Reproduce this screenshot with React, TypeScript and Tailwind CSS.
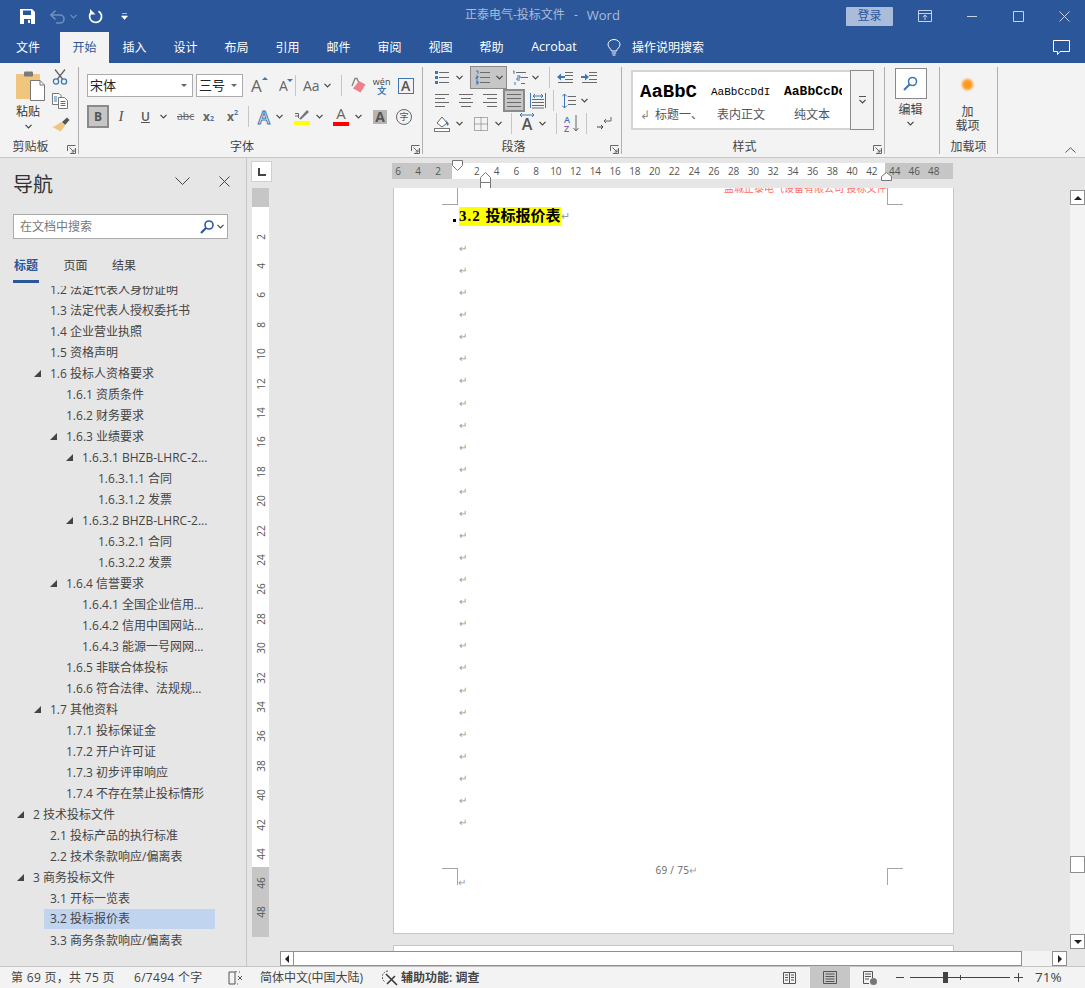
import type { ReactNode } from 'react';

const BLUE = '#3f77b5';
const GRAY = '#6a6a6a';

const Chev = ({ color = '#444', className = '' }: { color?: string; className?: string }) => (
  <svg width="7" height="5" viewBox="0 0 7 5" className={className}>
    <path d="M0.5 0.8 3.5 3.8 6.5 0.8" fill="none" stroke={color} strokeWidth="1.2" />
  </svg>
);

const Launcher = ({ className = '' }: { className?: string }) => (
  <svg width="9" height="9" viewBox="0 0 9 9" className={className}>
    <path d="M0.5 6V0.5H8.5M8.5 3V8.5H3M2.5 2.5 7 7M7 4.5V7H4.5" fill="none" stroke="#666" strokeWidth="1" />
  </svg>
);

const Lines = ({ kind }: { kind: 'left' | 'center' | 'right' | 'justify' }) => {
  const rows = {
    left: ['M0 1.5H14', 'M0 5.5H10', 'M0 9.5H14', 'M0 13.5H10'],
    center: ['M0 1.5H14', 'M2 5.5H12', 'M0 9.5H14', 'M2 13.5H12'],
    right: ['M0 1.5H14', 'M4 5.5H14', 'M0 9.5H14', 'M4 13.5H14'],
    justify: ['M0 1.5H14', 'M0 5.5H14', 'M0 9.5H14', 'M0 13.5H14'],
  }[kind];
  return (
    <svg width="14" height="15" viewBox="0 0 14 15">
      {rows.map((d) => (
        <path key={d} d={d} stroke={GRAY} strokeWidth="1" />
      ))}
    </svg>
  );
};

const Group = ({
  label,
  width,
  children,
  launcher = true,
}: {
  label: string;
  width: string;
  children: ReactNode;
  launcher?: boolean;
}) => (
  <div className={`${width} mt-[3px] flex h-[87px] shrink-0 flex-col border-r border-[#b0b0b0]`}>
    <div className="-mt-[3px] h-[73px] shrink-0">{children}</div>
    <div className="flex h-[17px] items-center pt-[2px]">
      <span className={`flex-1 text-center text-[12px] leading-none text-[#444] ${launcher ? 'pr-[6px]' : ''}`}>{label}</span>
      {launcher && <Launcher className="mr-[2px] mt-[5px]" />}
    </div>
  </div>
);

const Clipboard = () => (
  <div className="flex h-[73px]">
    <div className="ml-[16px] flex w-[28px] flex-col items-start">
      <svg width="29" height="31" viewBox="0 0 29 31" className="mt-[7px]">
        <rect x="0" y="3" width="24" height="25" rx="1" fill="#f0c67e" />
        <rect x="8" y="0.5" width="9" height="5" rx="1" fill="#7a7a7a" />
        <path d="M14.5 9.5H24L28.5 14V29.5H14.5Z" fill="#fff" stroke="#777" />
        <path d="M24 9.5V14H28.5" fill="none" stroke="#777" />
      </svg>
      <span className="mt-[3px] whitespace-nowrap text-[12px] leading-[14px] text-[#333]">粘贴</span>
      <Chev className="ml-[9px] mt-[5px]" />
    </div>
    <div className="ml-[8px] flex flex-col gap-[8px] pt-[5px]">
      <svg width="16" height="16" viewBox="0 0 16 16">
        <path d="M3 0.5 10.5 10M13 0.5 5.5 10" stroke="#666" strokeWidth="1.3" fill="none" />
        <circle cx="4" cy="12.5" r="2.6" fill="none" stroke={BLUE} strokeWidth="1.3" />
        <circle cx="12" cy="12.5" r="2.6" fill="none" stroke={BLUE} strokeWidth="1.3" />
      </svg>
      <svg width="16" height="16" viewBox="0 0 16 16">
        <path d="M0.5 0.5H7L9 2.5V11.5H0.5Z" fill="#fff" stroke="#777" />
        <path d="M6.5 4.5H12.5L15.5 7.5V15.5H6.5Z" fill="#fff" stroke="#777" />
        <path d="M8.5 8.5H13.5M8.5 10.5H13.5M8.5 12.5H13.5M2 4H5M2 6H5M2 8H5" stroke={BLUE} />
      </svg>
      <svg width="18" height="15" viewBox="0 0 18 15">
        <path d="M10 5 15 0.5 17.5 3 13 8Z" fill="#555" />
        <path d="M9 5 13 9 8.5 14.5 0.5 10 4 8.5Z" fill="#f0c67e" />
      </svg>
    </div>
  </div>
);

const FontGroup = () => (
  <div className="flex h-[73px] flex-col pl-[8px] pt-[10px] text-[#444]">
    <div className="flex h-[23px] items-center">
      <div className="flex h-[23px] w-[106px] items-center justify-between border border-[#ababab] bg-white pl-[2px] pr-[5px]">
        <span className="text-[13px] leading-none text-[#222]">宋体</span>
        <span className="h-0 w-0 border-x-[3px] border-t-[3px] border-x-transparent border-t-[#666]" />
      </div>
      <div className="ml-[3px] flex h-[23px] w-[47px] items-center justify-between border border-[#ababab] bg-white pl-[2px] pr-[5px]">
        <span className="text-[13px] leading-none text-[#222]">三号</span>
        <span className="h-0 w-0 border-x-[3px] border-t-[3px] border-x-transparent border-t-[#666]" />
      </div>
      <span className="relative ml-[8px] w-[14px] text-[17px] leading-none text-[#666]">
        A
        <span className="absolute right-[-3px] top-0 h-0 w-0 border-x-[3px] border-b-[3px] border-x-transparent border-b-[#3f77b5]" />
      </span>
      <span className="relative ml-[11px] w-[15px] text-center text-[14px] leading-none text-[#666]">
        A
        <span className="absolute right-[-2px] top-0 h-0 w-0 border-x-[3px] border-t-[3px] border-x-transparent border-t-[#3f77b5]" />
      </span>
      <div className="ml-[4px] h-[21px] w-px bg-[#c6c6c6]" />
      <span className="ml-[7px] text-[14px] leading-none text-[#666]">Aa</span>
      <Chev className="ml-[4px]" />
      <div className="ml-[10px] h-[21px] w-px bg-[#c6c6c6]" />
      <svg width="17" height="17" viewBox="0 0 17 17" className="ml-[8px]">
        <path d="M9 4 15.5 7.5 10.5 15.5 3 11.5Z" fill="#ef7f8c" />
        <path d="M2 9 5 1.5 7 1.5 8.5 5" fill="none" stroke="#888" strokeWidth="1.4" />
      </svg>
      <span className="ml-[7px] flex w-[16px] flex-col items-center text-[9px] leading-[9px] text-[#444]">
        wén
        <span className="font-bold text-[#3f77b5]">文</span>
      </span>
      <span className="ml-[8px] flex h-[16px] w-[16px] items-center justify-center border border-[#3f77b5] text-[14px] font-semibold leading-none text-[#555]">
        A
      </span>
    </div>
    <div className="mt-[8px] flex h-[23px] items-center">
      <span className="flex h-[23px] w-[22px] items-center justify-center border-2 border-[#8a8a8a] bg-[#c6c6c6] text-[12px] font-bold leading-none text-[#555]">
        B
      </span>
      <span className="ml-[6px] w-[12px] text-center font-['Liberation_Serif',serif] text-[15px] italic leading-none text-[#555]">I</span>
      <span className="ml-[14px] w-[9px] text-[12px] font-semibold leading-none text-[#555] underline">U</span>
      <Chev className="ml-[10px]" />
      <span className="ml-[10px] w-[16px] whitespace-nowrap text-[10.5px] leading-none text-[#666] line-through">abc</span>
      <span className="ml-[10px] w-[12px] whitespace-nowrap text-[12px] font-bold leading-none text-[#666]">
        x<span className="text-[7px] text-[#3f77b5]">2</span>
      </span>
      <span className="ml-[12px] flex w-[13px] text-[12px] font-bold leading-none text-[#666]">
        x<span className="-mt-[2px] text-[7px] text-[#3f77b5]">2</span>
      </span>
      <div className="ml-[8px] h-[21px] w-px bg-[#c6c6c6]" />
      <span className="ml-[8px] w-[14px] text-center text-[18px] font-semibold leading-none text-white [-webkit-text-stroke:1px_#3f77b5]">A</span>
      <Chev className="ml-[5px]" />
      <div className="ml-[11px] flex w-[16px] flex-col items-center">
        <svg width="16" height="12" viewBox="0 0 16 12">
          <path d="M5 11 13 2 15 4 7 11.5Z" fill="#777" />
          <path d="M1 5.5H4.5V10M1 8H4" fill="none" stroke="#666" />
        </svg>
        <div className="mt-px h-[4px] w-[16px] bg-[#ffff00]" />
      </div>
      <Chev className="ml-[6px]" />
      <div className="ml-[10px] flex w-[16px] flex-col items-center">
        <span className="h-[13px] text-[15px] leading-[13px] text-[#666]">A</span>
        <div className="mt-[2px] h-[4px] w-[16px] bg-[#ff0000]" />
      </div>
      <Chev className="ml-[6px]" />
      <span className="ml-[11px] flex h-[14px] w-[14px] items-center justify-center bg-[#b5b5b5] text-[14px] font-bold leading-none text-[#555]">
        A
      </span>
      <span className="ml-[9px] flex h-[16px] w-[16px] items-center justify-center rounded-full border border-[#666] text-[9px] leading-none text-[#555]">
        字
      </span>
    </div>
  </div>
);

const ParagraphGroup = () => (
  <div className="flex h-[73px] flex-col pl-[12px] pt-[2px]">
    <div className="flex h-[23px] items-center">
      <svg width="14" height="15" viewBox="0 0 14 15">
        <path d="M4 2.5H14M4 7.5H14M4 12.5H14" stroke={GRAY} />
        <path d="M0 1H3V4H0ZM0 6H3V9H0ZM0 11H3V14H0Z" fill={BLUE} />
      </svg>
      <Chev className="ml-[7px]" />
      <div className="ml-[7px] flex h-[23px] w-[37px] items-center gap-[6px] border border-[#8a8a8a] bg-[#c6c6c6] pl-[4px]">
        <svg width="15" height="15" viewBox="0 0 15 15">
          <path d="M5 2.5H15M5 7.5H15M5 12.5H15" stroke={GRAY} />
          <path d="M1 1H3V4M1 6H3V7.5H1V9H3M1 11H3V14H1M1 12.5H3" fill="none" stroke={BLUE} />
        </svg>
        <Chev />
      </div>
      <svg width="16" height="16" viewBox="0 0 16 16" className="ml-[5px]">
        <path d="M4 2.5H14M9 7.5H16M9 13.5H13" stroke={GRAY} />
        <path d="M1 1H2V4M5 6H8V8H5V10H8M3 12V15" fill="none" stroke={BLUE} />
      </svg>
      <Chev className="ml-[4px]" />
      <div className="ml-[10px] h-[21px] w-px bg-[#c6c6c6]" />
      <svg width="16" height="15" viewBox="0 0 16 15" className="ml-[7px]">
        <path d="M8 2.5H16M8 5.5H16M8 9.5H16M1 12.5H16" stroke={GRAY} />
        <path d="M0 7 4 3.5V6H8V8H4V10.5Z" fill={BLUE} />
      </svg>
      <svg width="16" height="15" viewBox="0 0 16 15" className="ml-[8px]">
        <path d="M8 2.5H16M8 5.5H16M8 9.5H16M1 12.5H16" stroke={GRAY} />
        <path d="M8 7 4 3.5V6H0V8H4V10.5Z" fill={BLUE} />
      </svg>
    </div>
    <div className="flex h-[23px] items-center">
      <Lines kind="left" />
      <span className="ml-[10px]">
        <Lines kind="center" />
      </span>
      <span className="ml-[10px]">
        <Lines kind="right" />
      </span>
      <div className="ml-[6px] flex h-[23px] w-[22px] items-center justify-center border-2 border-[#8a8a8a] bg-[#c6c6c6]">
        <Lines kind="justify" />
      </div>
      <svg width="16" height="16" viewBox="0 0 16 16" className="ml-[5px]">
        <path d="M2 6.5H14M2 9.5H14M2 12.5H14M2 15H14" stroke={GRAY} />
        <path d="M0.5 0V15M15.5 0V15M3 3H13M5 1 3 3 5 5M11 1 13 3 11 5" fill="none" stroke={BLUE} />
      </svg>
      <div className="ml-[7px] h-[21px] w-px bg-[#c6c6c6]" />
      <svg width="14" height="16" viewBox="0 0 14 16" className="ml-[8px]">
        <path d="M6 3.5H14M6 7.5H14M6 11.5H14" stroke={GRAY} />
        <path d="M2.5 1V15M0 3.5 2.5 1 5 3.5M0 12.5 2.5 15 5 12.5" fill="none" stroke={BLUE} />
      </svg>
      <Chev className="ml-[5px]" />
    </div>
    <div className="-ml-px flex h-[23px] items-center">
      <svg width="16" height="17" viewBox="0 0 16 17">
        <path d="M3 8 8 2 13 8 8 12Z" fill="#fff" stroke="#666" />
        <path d="M12 5 15 9 13 11Z" fill={BLUE} />
        <rect x="0.5" y="13.5" width="15" height="3" fill="#fff" stroke="#777" />
      </svg>
      <Chev className="ml-[6px]" />
      <svg width="14" height="14" viewBox="0 0 14 14" className="ml-[11px]">
        <path
          d="M0.5 0.5H13.5V13.5H0.5ZM7 0.5V13.5M0.5 7H13.5"
          fill="none"
          stroke="#666"
          strokeDasharray="1 1"
        />
      </svg>
      <Chev className="ml-[7px]" />
      <div className="ml-[9px] h-[21px] w-px bg-[#c6c6c6]" />
      <span className="relative ml-[7px] w-[16px] text-center text-[16px] font-semibold leading-none text-[#555]">
        A
        <svg width="16" height="6" viewBox="0 0 16 6" className="absolute -top-[4px] left-0">
          <path d="M1 3H15M3 1 1 3 3 5M13 1 15 3 13 5" fill="none" stroke={BLUE} />
        </svg>
      </span>
      <Chev className="ml-[4px]" />
      <div className="ml-[10px] h-[21px] w-px bg-[#c6c6c6]" />
      <span className="ml-[7px] flex w-[9px] flex-col text-[9px] font-semibold leading-[9px]">
        <span className="text-[#3f77b5]">A</span>
        <span className="text-[#8a5aa8]">Z</span>
      </span>
      <svg width="6" height="17" viewBox="0 0 6 17">
        <path d="M3 0V16M0.5 13 3 16 5.5 13" fill="none" stroke="#666" />
      </svg>
      <div className="ml-[7px] h-[21px] w-px bg-[#c6c6c6]" />
      <svg width="15" height="15" viewBox="0 0 15 15" className="ml-[10px]">
        <path d="M14 1V5H7M9 3 7 5 9 7" fill="none" stroke="#666" />
        <path d="M0 11H6M4 9 6 11 4 13" fill="none" stroke="#444" />
      </svg>
    </div>
  </div>
);

const StylesGroup = () => (
  <div className="flex h-[73px] pl-[9px] pt-[6px]">
    <div className="flex h-[60px] w-[219px] overflow-hidden border-y-2 border-l-2 border-[#d4d4d4] bg-white">
      <div className="flex w-[78px] shrink-0 flex-col pl-[7px]">
        <span className="mt-[8px] h-[24px] font-['Liberation_Mono',monospace] text-[19px] font-bold leading-[24px] text-black">
          AaBbC
        </span>
        <span className="mt-[3px] whitespace-nowrap text-[12px] leading-[16px] text-[#555]">
          <span className="mr-[5px] text-[#888]">↲</span>标题一、
        </span>
      </div>
      <div className="flex w-[73px] shrink-0 flex-col">
        <span className="mt-[8px] h-[24px] whitespace-nowrap font-['Liberation_Mono',monospace] text-[11px] leading-[24px] text-black">
          AaBbCcDdI
        </span>
        <span className="mt-[3px] whitespace-nowrap pl-[6px] text-[12px] leading-[16px] text-[#555]">表内正文</span>
      </div>
      <div className="flex w-[58px] shrink-0 flex-col overflow-hidden">
        <span className="mt-[8px] h-[24px] whitespace-nowrap font-['Liberation_Mono',monospace] text-[13px] font-bold leading-[24px] text-black">
          AaBbCcDd
        </span>
        <span className="mt-[3px] whitespace-nowrap pl-[10px] text-[12px] leading-[16px] text-[#555]">纯文本</span>
      </div>
    </div>
    <div className="flex h-[60px] w-[24px] flex-col items-center justify-center border border-[#8a8a8a] bg-[#f3f3f3]">
      <div className="h-px w-[7px] bg-[#555]" />
      <Chev className="mt-[2px]" />
    </div>
  </div>
);

const EditGroup = () => (
  <div className="flex h-[73px] flex-col items-center pr-[3px] pt-[4px]">
    <div className="flex h-[31px] w-[32px] items-center justify-center border border-[#8a8a8a] bg-white">
      <svg width="15" height="15" viewBox="0 0 15 15">
        <circle cx="9.5" cy="5.5" r="4" fill="none" stroke={BLUE} strokeWidth="1.6" />
        <path d="M6.5 8.5 1 14" stroke={BLUE} strokeWidth="2.2" />
      </svg>
    </div>
    <span className="mt-[3px] text-[12px] leading-[16px] text-[#444]">编辑</span>
    <Chev className="mt-[3px]" />
  </div>
);

const AddinGroup = () => (
  <div className="flex h-[73px] flex-col items-center pr-[2px] pt-[15px]">
    <div className="h-[11px] w-[11px] rounded-full bg-[#ff9a1e] blur-[1px]" />
    <span className="mt-[14px] text-[12px] leading-[15px] text-[#444]">加</span>
    <span className="text-[12px] leading-[14px] text-[#444]">载项</span>
  </div>
);

const TitleBar = () => (
  <div className="flex h-[32px] items-center">
    <svg width="15" height="15" viewBox="0 0 15 15" className="ml-[20px]">
      <path d="M0 0H12L15 3V15H0Z" fill="#fff" />
      <path d="M3 1.5H11V6H3Z" fill="#2b579a" />
      <path d="M4 10H11V15H4Z" fill="#2b579a" />
      <path d="M8 11H10V14H8Z" fill="#fff" />
    </svg>
    <svg width="15" height="15" viewBox="0 0 15 15" className="ml-[15px]">
      <path d="M1.5 6H10A4 4 0 0 1 10 14H6M5.5 1.5 1 6 5.5 10.5" fill="none" stroke="#6f8fbe" strokeWidth="1.6" />
    </svg>
    <Chev color="#6f8fbe" className="ml-[5px]" />
    <svg width="15" height="15" viewBox="0 0 15 15" className="ml-[11px]">
      <path d="M10.5 2.2A6 6 0 1 1 3.6 3" fill="none" stroke="#fff" strokeWidth="1.7" />
      <path d="M2 0V5.5H7.5Z" fill="#fff" />
    </svg>
    <svg width="7" height="7" viewBox="0 0 7 7" className="ml-[18px]">
      <path d="M1 0.5H6M0.5 3H6.5L3.5 6.5Z" fill="#fff" stroke="#fff" strokeWidth="0.6" />
    </svg>
    <span className="-mt-px ml-[337px] flex w-[156px] whitespace-nowrap text-[12px] leading-none text-[#a9bcd9]">
      <span>正泰电气-投标文件</span>
      <span className="ml-[9px]">-</span>
      <span className="ml-[9px] text-[13px]">Word</span>
    </span>
    <span className="ml-[225px] flex h-[19px] w-[47px] items-center justify-center rounded-[1px] bg-[#a9bcd9] text-[12px] leading-none text-[#2b579a]">
      登录
    </span>
    <svg width="14" height="12" viewBox="0 0 14 12" className="ml-[25px]">
      <path d="M0.5 0.5H13.5V11.5H0.5ZM0.5 3.5H13.5M7 10V5M4.8 7 7 5 9.2 7" fill="none" stroke="#c6d2e6" />
    </svg>
    <svg width="10" height="1" viewBox="0 0 10 1" className="ml-[35px]">
      <path d="M0 0.5H10" stroke="#c6d2e6" />
    </svg>
    <svg width="11" height="11" viewBox="0 0 11 11" className="ml-[36px]">
      <path d="M0.5 0.5H10.5V10.5H0.5Z" fill="none" stroke="#c6d2e6" />
    </svg>
    <svg width="11" height="11" viewBox="0 0 11 11" className="ml-[35px]">
      <path d="M0.5 0.5 10.5 10.5M10.5 0.5 0.5 10.5" stroke="#c6d2e6" />
    </svg>
  </div>
);

const TabBar = () => (
  <div className="flex h-[31px] items-stretch text-[12px] leading-none text-white">
    <span className="flex w-[60px] items-center pl-[16px]">文件</span>
    <span className="flex w-[49px] items-center justify-center bg-[#f3f3f3] text-[#2b579a]">开始</span>
    {['插入', '设计', '布局', '引用', '邮件', '审阅', '视图', '帮助'].map((t) => (
      <span key={t} className="flex w-[51px] items-center justify-center">
        {t}
      </span>
    ))}
    <span className="flex w-[74px] items-center justify-center text-[12.5px]">Acrobat</span>
    <svg width="14" height="17" viewBox="0 0 14 17" className="ml-[16px] self-center">
      <path
        d="M4.5 12C4 9.5 1 8.5 1 5.5A6 5 0 0 1 13 5.5C13 8.5 10 9.5 9.5 12ZM4.8 14H9.2M5.5 16H8.5"
        fill="none"
        stroke="#fff"
      />
    </svg>
    <span className="ml-[11px] flex items-center">操作说明搜索</span>
    <svg width="17" height="15" viewBox="0 0 17 15" className="ml-[349px] self-center">
      <path d="M0.5 0.5H16.5V11.5H7L4.5 14.5V11.5H0.5Z" fill="none" stroke="#fff" />
    </svg>
  </div>
);

const Ribbon = () => (
  <div className="relative flex h-[95px] border-b border-[#c6c6c6] bg-[#f3f3f3] pt-px">
    <Group label="剪贴板" width="w-[79px]">
      <Clipboard />
    </Group>
    <Group label="字体" width="w-[344px]">
      <FontGroup />
    </Group>
    <Group label="段落" width="w-[199px]">
      <ParagraphGroup />
    </Group>
    <Group label="样式" width="w-[263px]">
      <StylesGroup />
    </Group>
    <Group label="" width="w-[55px]" launcher={false}>
      <EditGroup />
    </Group>
    <Group label="加载项" width="w-[58px]" launcher={false}>
      <AddinGroup />
    </Group>
    <svg width="11" height="6" viewBox="0 0 11 6" className="absolute bottom-[4px] right-[9px]">
      <path d="M0.5 5.5 5.5 0.8 10.5 5.5" fill="none" stroke="#555" />
    </svg>
  </div>
);

type Row = { l: 1 | 2 | 3 | 4 | 5; t: string; a?: boolean; sel?: boolean };

const tree: Row[] = [
  { l: 2, t: '1.2 法定代表人身份证明' },
  { l: 2, t: '1.3 法定代表人授权委托书' },
  { l: 2, t: '1.4 企业营业执照' },
  { l: 2, t: '1.5 资格声明' },
  { l: 2, t: '1.6 投标人资格要求', a: true },
  { l: 3, t: '1.6.1 资质条件' },
  { l: 3, t: '1.6.2 财务要求' },
  { l: 3, t: '1.6.3 业绩要求', a: true },
  { l: 4, t: '1.6.3.1 BHZB-LHRC-2...', a: true },
  { l: 5, t: '1.6.3.1.1 合同' },
  { l: 5, t: '1.6.3.1.2 发票' },
  { l: 4, t: '1.6.3.2 BHZB-LHRC-2...', a: true },
  { l: 5, t: '1.6.3.2.1 合同' },
  { l: 5, t: '1.6.3.2.2 发票' },
  { l: 3, t: '1.6.4 信誉要求', a: true },
  { l: 4, t: '1.6.4.1 全国企业信用...' },
  { l: 4, t: '1.6.4.2 信用中国网站...' },
  { l: 4, t: '1.6.4.3 能源一号网网...' },
  { l: 3, t: '1.6.5 非联合体投标' },
  { l: 3, t: '1.6.6 符合法律、法规规...' },
  { l: 2, t: '1.7 其他资料', a: true },
  { l: 3, t: '1.7.1 投标保证金' },
  { l: 3, t: '1.7.2 开户许可证' },
  { l: 3, t: '1.7.3 初步评审响应' },
  { l: 3, t: '1.7.4 不存在禁止投标情形' },
  { l: 1, t: '2 技术投标文件', a: true },
  { l: 2, t: '2.1 投标产品的执行标准' },
  { l: 2, t: '2.2 技术条款响应/偏离表' },
  { l: 1, t: '3 商务投标文件', a: true },
  { l: 2, t: '3.1 开标一览表' },
  { l: 2, t: '3.2 投标报价表', sel: true },
  { l: 2, t: '3.3 商务条款响应/偏离表' },
];

const indent = {
  1: 'pl-[17px]',
  2: 'pl-[34px]',
  3: 'pl-[50px]',
  4: 'pl-[66px]',
  5: 'pl-[82px]',
};

const NavPanel = () => (
  <div className="flex h-[808px] w-[247px] shrink-0 flex-col border-r border-[#c6c6c6]">
    <div className="flex h-[56px] items-center pl-[13px]">
      <span className="-mt-[2px] text-[20px] leading-none text-[#333]">导航</span>
      <svg width="15" height="8" viewBox="0 0 15 8" className="-mt-[10px] ml-[122px]">
        <path d="M0.5 0.5 7.5 7.5 14.5 0.5" fill="none" stroke="#444" />
      </svg>
      <svg width="11" height="11" viewBox="0 0 11 11" className="-mt-[10px] ml-[29px]">
        <path d="M0.5 0.5 10.5 10.5M10.5 0.5 0.5 10.5" stroke="#444" />
      </svg>
    </div>
    <div className="ml-[13px] flex h-[25px] w-[215px] items-center border border-[#ababab] bg-white pl-[6px]">
      <span className="flex-1 text-[12px] leading-none text-[#777]">在文档中搜索</span>
      <svg width="14" height="14" viewBox="0 0 14 14">
        <circle cx="9" cy="5" r="4" fill="none" stroke="#2b579a" strokeWidth="1.6" />
        <path d="M6 8 1 13" stroke="#2b579a" strokeWidth="2.2" />
      </svg>
      <Chev className="mx-[3px]" />
    </div>
    <div className="mt-[15px] flex h-[29px] gap-[24.5px] pl-[13px] text-[12px] leading-none text-[#444]">
      <span className="flex h-[29px] w-[26px] flex-col items-center justify-between pt-[6px] font-semibold text-[#2b579a]">
        标题
        <span className="h-[3px] w-[26px] bg-[#2b579a]" />
      </span>
      <span className="pt-[6px]">页面</span>
      <span className="pt-[6px]">结果</span>
    </div>
    <div className="mt-[3px] flex-1 overflow-hidden">
      <div className="-mt-[7px] pt-0">
        {tree.map((r) => (
          <div
            key={r.t}
            className={
              r.sel
                ? 'ml-[44px] flex h-[20px] w-[171px] items-center bg-[#c0d4f0] pl-[7px] mb-px'
                : `flex h-[21px] items-center ${indent[r.l]}`
            }
          >
            {!r.sel && (
              <span className="flex w-[17px] shrink-0">
                {r.a && (
                  <svg width="7" height="7" viewBox="0 0 7 7">
                    <path d="M7 0V7H0Z" fill="#444" />
                  </svg>
                )}
              </span>
            )}
            <span className="-ml-px whitespace-nowrap text-[12px] leading-none text-[#444]">{r.t}</span>
          </div>
        ))}
      </div>
    </div>
  </div>
);

const hNums = Array.from({ length: 21 }, (_, i) => (i + 1) * 2);
const vNums = Array.from({ length: 22 }, (_, i) => (i + 1) * 2);

const RulerV = ({ n }: { n: number }) => (
  <div className="flex h-[29.4px] items-center justify-center">
    <span className="-rotate-90 text-[10px] leading-none text-[#555]">{n}</span>
  </div>
);

const VRuler = () => (
  <div className="flex w-[26px] shrink-0 flex-col">
    <div className="ml-[4px] mt-[3px] flex h-[21px] w-[21px] items-center justify-center border border-[#d0d0d0] bg-white">
      <svg width="8" height="8" viewBox="0 0 8 8">
        <path d="M1 0V7H8" fill="none" stroke="#444" strokeWidth="2" />
      </svg>
    </div>
    <div className="ml-[5px] mt-[6px] w-[17px]">
      <div className="h-[19px] bg-[#c6c6c6]" />
      <div className="h-[660px] bg-white pt-[15px]">
        {vNums.map((n) => (
          <RulerV key={n} n={n} />
        ))}
      </div>
      <div className="h-[70px] bg-[#c6c6c6] pt-px">
        <RulerV n={46} />
        <RulerV n={48} />
      </div>
    </div>
  </div>
);

const HRuler = () => (
  <div className="relative ml-[119px] mt-[5px] flex h-[16px] w-[561px] text-[10px] leading-[16px] text-[#555]">
    <div className="flex w-[60px] bg-[#c6c6c6]">
      {[6, 4, 2].map((n) => (
        <span key={n} className="w-[20px] shrink-0 text-center first:-ml-[4px]">
          {n}
        </span>
      ))}
    </div>
    <div className="flex w-[433px] bg-white pl-[15px]">
      {hNums.map((n) => (
        <span key={n} className="w-[19.75px] shrink-0 text-center">
          {n}
        </span>
      ))}
    </div>
    <div className="flex w-[68px] bg-[#c6c6c6]">
      {[44, 46, 48].map((n) => (
        <span key={n} className="w-[19.5px] shrink-0 text-center">
          {n}
        </span>
      ))}
    </div>
    <svg width="11" height="11" viewBox="0 0 11 11" className="absolute -top-[3px] left-[60px]">
      <path d="M0.5 0.5H10.5V5.5L5.5 10.5 0.5 5.5Z" fill="#fff" stroke="#777" />
    </svg>
    <svg width="11" height="17" viewBox="0 0 11 17" className="absolute left-[88px] top-[9px]">
      <path d="M0.5 5.5 5.5 0.5 10.5 5.5V10.5H0.5ZM0.5 10.5V16.5H10.5V10.5" fill="#fff" stroke="#777" />
    </svg>
    <svg width="11" height="9" viewBox="0 0 11 9" className="absolute left-[489px] top-[9px]">
      <path d="M0.5 4.5 5.5 0.5 10.5 4.5V8.5H0.5Z" fill="#fff" stroke="#777" />
    </svg>
  </div>
);

const Corner = ({ className }: { className: string }) => (
  <div className={`absolute h-[17px] w-[16px] border-[#a6a6a6] ${className}`} />
);

const Page = () => (
  <div className="relative ml-[120px] mt-[9px] h-[746px] w-[561px] overflow-hidden border-x border-b border-[#c6c6c6] bg-white">
    <Corner className="left-[48px] top-0 border-b border-r" />
    <Corner className="left-[493px] top-0 border-b border-l" />
    <Corner className="left-[48px] top-[680px] border-r border-t" />
    <Corner className="left-[493px] top-[680px] border-l border-t" />
    <div className="-mt-[5px] h-[10px] whitespace-nowrap pl-[330px] text-[10px] leading-[10px] text-[#ff6a6a]">
      盐城正泰电气设备有限公司 投标文件
    </div>
    <div className="mt-[14px] flex h-[19px] items-center pl-[59px] font-['Liberation_Serif','Noto_Sans_CJK_SC',serif] text-[15px] font-bold text-black">
      <span className="mr-[3px] mt-[8px] h-[3px] w-[3px] bg-black" />
      <span className="flex h-[19px] items-center bg-[#ffff00] leading-none">
        <span className="whitespace-pre tracking-[1px]">3.2 </span>
        投标报价表
      </span>
      <span className="text-[11px] font-normal text-[#999]">↵</span>
    </div>
    <div className="mt-[11px] pl-[65px]">
      {Array.from({ length: 27 }, (_, i) => (
        <div key={i} className="h-[22.08px] text-[10px] leading-[22px] text-[#9a9a9a]">
          ↵
        </div>
      ))}
    </div>
    <div className="mt-[31px] flex h-[12px] items-center justify-center whitespace-pre pl-[6px] text-[10px] leading-none tracking-[0.3px] text-[#666]">
      69 / 75<span className="text-[#9a9a9a]">↵</span>
    </div>
    <div className="pl-[64px] text-[10px] leading-[12px] text-[#9a9a9a]">↵</div>
  </div>
);

const ScrollBtn = ({ dir, className = '' }: { dir: 'up' | 'down' | 'left' | 'right'; className?: string }) => (
  <div className={`flex h-[15px] w-[15px] shrink-0 items-center justify-center border border-[#8f8f8f] bg-white ${className}`}>
    {dir === 'up' && <span className="h-0 w-0 border-x-[4px] border-b-[4px] border-x-transparent border-b-[#222]" />}
    {dir === 'down' && <span className="h-0 w-0 border-x-[4px] border-t-[4px] border-x-transparent border-t-[#222]" />}
    {dir === 'left' && <span className="h-0 w-0 border-y-[4px] border-r-[4px] border-y-transparent border-r-[#222]" />}
    {dir === 'right' && <span className="h-0 w-0 border-y-[4px] border-l-[4px] border-y-transparent border-l-[#222]" />}
  </div>
);

const DocArea = () => (
  <div className="flex min-w-0 flex-1 flex-col">
    <div className="h-[793px] overflow-hidden">
      <HRuler />
      <Page />
      <div className="ml-[120px] mt-[11px] h-[10px] w-[561px] border-x border-t border-[#c6c6c6] bg-white" />
    </div>
    <div className="flex h-[15px] pl-[7px]">
      <ScrollBtn dir="left" className="!w-[14px]" />
      <div className="w-[728px] border-y border-r border-[#8f8f8f] bg-white" />
      <div className="w-[30px] bg-[#f3f3f3]" />
      <ScrollBtn dir="right" />
    </div>
  </div>
);

const VScroll = () => (
  <div className="flex w-[16px] shrink-0 flex-col pl-px pt-[32px]">
    <ScrollBtn dir="up" />
    <div className="h-[729px] bg-[#f3f3f3] pt-[651px]">
      <div className="h-[17px] w-[15px] border border-[#8f8f8f] bg-white" />
    </div>
    <ScrollBtn dir="down" />
  </div>
);

const StatusBar = () => (
  <div className="flex h-[22px] items-center border-t border-[#c6c6c6] bg-[#f3f3f3] pl-[11px] text-[12px] leading-none text-[#444]">
    <span className="w-[123px] whitespace-nowrap tracking-[0.3px]">第 69 页，共 75 页</span>
    <span className="w-[94px] whitespace-nowrap tracking-[0.3px]">6/7494 个字</span>
    <svg width="15" height="14" viewBox="0 0 15 14">
      <path d="M7 1H1V13H7V1C7 1 8 0 9 1M9 13H10M11 1H12" fill="none" stroke="#555" />
      <path d="M10 5 14 9M14 5 10 9" stroke="#555" />
    </svg>
    <span className="ml-[17px] w-[122px] whitespace-nowrap">简体中文(中国大陆)</span>
    <svg width="16" height="16" viewBox="0 0 16 16">
      <path d="M6 1A6 6 0 0 0 3 12" fill="none" stroke="#555" strokeDasharray="2 1" />
      <path d="M4 4 15 15M5 14 13 6" stroke="#333" strokeWidth="1.5" />
    </svg>
    <span className="ml-[3px] w-[382px] whitespace-nowrap font-semibold">辅助功能: 调查</span>
    <svg width="13" height="14" viewBox="0 0 13 14">
      <path d="M0.5 1.5H6.5V12.5H0.5ZM6.5 1.5H12.5V12.5H6.5ZM2 4H5M2 6.5H5M2 9H5M8 4H11M8 6.5H11M8 9H11" fill="none" stroke="#555" />
    </svg>
    <div className="ml-[14px] flex h-[21px] w-[40px] items-center justify-center bg-[#c6c6c6]">
      <svg width="14" height="13" viewBox="0 0 14 13">
        <path d="M0.5 0.5H13.5V12.5H0.5ZM2.5 3H11.5M2.5 5.5H11.5M2.5 8H11.5M2.5 10.5H11.5" fill="none" stroke="#555" />
      </svg>
    </div>
    <svg width="14" height="14" viewBox="0 0 14 14" className="ml-[13px]">
      <path d="M0.5 0.5H9.5V7M0.5 0.5V12.5H6M2 3H8M2 5.5H8M2 8H6" fill="none" stroke="#555" />
      <circle cx="10.5" cy="10.5" r="3.5" fill="#777" />
    </svg>
    <div className="ml-[19px] h-px w-[8px] bg-[#444]" />
    <div className="relative ml-[6px] h-px w-[100px] bg-[#444]">
      <div className="absolute left-[33px] top-[-5px] h-[11px] w-[5px] bg-[#444]" />
      <div className="absolute left-[50px] top-[-2px] h-[5px] w-px bg-[#444]" />
    </div>
    <svg width="9" height="9" viewBox="0 0 9 9" className="ml-[4px]">
      <path d="M0 4.5H9M4.5 0V9" stroke="#444" />
    </svg>
    <span className="ml-[12px] text-[13.5px]">71%</span>
  </div>
);

export default function App() {
  return (
    <div className="h-[988px] w-[1085px] overflow-hidden bg-[#e6e6e6] font-['Open_Sans','Noto_Sans_CJK_SC',sans-serif]">
      <div className="bg-[#2b579a]">
        <TitleBar />
        <TabBar />
      </div>
      <Ribbon />
      <div className="flex h-[808px]">
        <NavPanel />
        <VRuler />
        <DocArea />
        <VScroll />
      </div>
      <StatusBar />
    </div>
  );
}
